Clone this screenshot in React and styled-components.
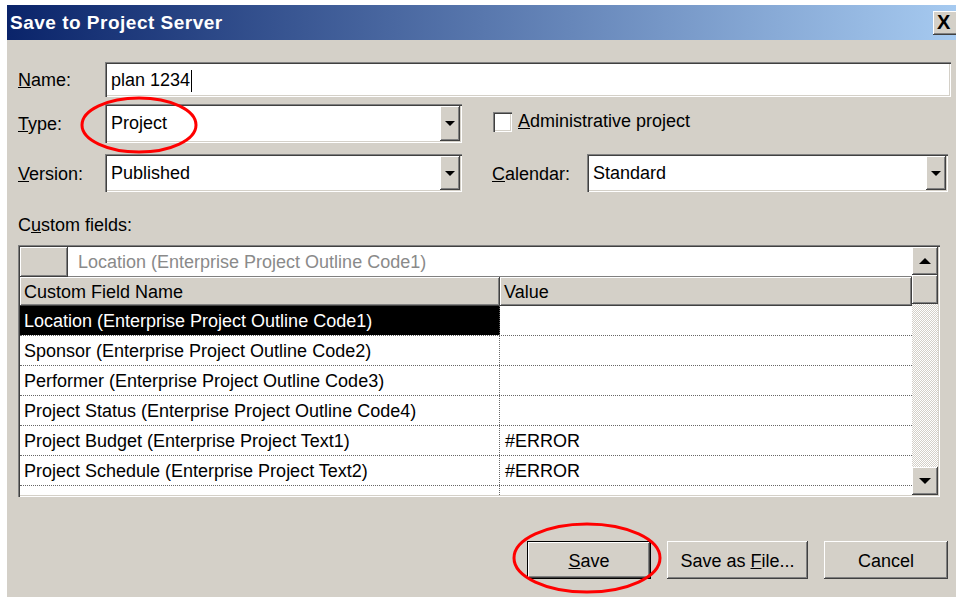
import React from 'react';
import styled, { createGlobalStyle, css } from 'styled-components';

const GlobalStyle = createGlobalStyle`
  html, body {
    margin: 0;
    background: #fff;
  }
  body {
    font-family: "Liberation Sans", Arial, sans-serif;
    color: #000;
  }
`;

const FACE = '#d4d0c8';

const sunken = css`
  box-shadow: inset 1px 1px #808080, inset 2px 2px #404040,
    inset -1px -1px #fff, inset -2px -2px ${FACE};
`;

const raised = css`
  box-shadow: inset -1px -1px #404040, inset 1px 1px #fff,
    inset -2px -2px #808080, inset 2px 2px ${FACE};
`;

const Window = styled.div`
  margin: 5px 0 0 7px;
  width: 949px;
  height: 592px;
  background: ${FACE};
  display: flex;
  flex-direction: column;
  overflow: hidden;
`;

const TitleBar = styled.div`
  height: 35px;
  flex-shrink: 0;
  background: linear-gradient(to right, #0a246a, #a6caf0);
  display: flex;
  align-items: center;
  justify-content: space-between;
  padding-left: 3px;
  overflow: hidden;
`;

const Title = styled.span`
  color: #fff;
  font-weight: bold;
  font-size: 19px;
  letter-spacing: 0.5px;
`;

const CloseButton = styled.div`
  width: 23px;
  height: 24px;
  margin-right: -4px;
  background: ${FACE};
  ${raised};
  display: flex;
  align-items: center;
  padding-left: 4px;
  font-weight: bold;
  font-size: 20px;
`;

const Body = styled.div`
  flex: 1;
  padding: 22px 0 0 11px;
  display: flex;
  flex-direction: column;
`;

const Row = styled.div`
  display: flex;
  align-items: center;
  height: ${(p) => p.$h}px;
  margin-bottom: ${(p) => p.$gap || 0}px;
`;

const Label = styled.label`
  width: ${(p) => p.$w || 87}px;
  margin-left: ${(p) => p.$offset || 0}px;
  flex-shrink: 0;
  font-size: 18px;
  padding-top: 2px;
  color: #000;
`;

const TextBox = styled.div`
  width: 846px;
  height: 100%;
  background: #fff;
  ${sunken};
  display: flex;
  align-items: center;
  padding: 2px 0 0 6px;
  box-sizing: border-box;
  font-size: 18px;
`;

const Caret = styled.span`
  display: inline-block;
  width: 1px;
  height: 22px;
  background: #000;
  margin-left: 1px;
`;

const Combo = styled.div`
  position: relative;
  width: ${(p) => p.$w}px;
  height: 100%;
  flex-shrink: 0;
  background: #fff;
  ${sunken};
  display: flex;
  align-items: center;
  justify-content: space-between;
  padding: 2px 2px 2px 6px;
  box-sizing: border-box;
  font-size: 18px;
`;

const DropButton = styled.div`
  width: 20px;
  height: 100%;
  background: ${FACE};
  ${raised};
  display: flex;
  align-items: center;
  justify-content: center;
`;

const Triangle = styled.span`
  width: 0;
  height: 0;
  border-left: ${(p) => p.$size || 5}px solid transparent;
  border-right: ${(p) => p.$size || 5}px solid transparent;
  ${(p) =>
    p.$up
      ? css`border-bottom: ${p.$size || 5}px solid #000;`
      : css`border-top: ${p.$size || 5}px solid #000;`}
`;

const CheckArea = styled.div`
  display: flex;
  align-items: center;
  margin-left: 31px;
  margin-top: -4px;
  font-size: 18px;
`;

const CheckBox = styled.span`
  width: 19px;
  height: 20px;
  background: #fff;
  ${sunken};
  margin-right: 6px;
`;

const Marker = styled.svg`
  position: absolute;
  pointer-events: none;
  z-index: 2;
  left: ${(p) => p.$x}px;
  top: ${(p) => p.$y}px;
`;

const SectionLabel = styled.div`
  font-size: 18px;
  height: 22px;
  line-height: 22px;
  margin: 22px 0 9px;
`;

const Grid = styled.div`
  width: 922px;
  height: 252px;
  ${sunken};
  padding: 2px;
  box-sizing: border-box;
  display: flex;
  background: #fff;
`;

const Table = styled.div`
  flex: 1;
  display: flex;
  flex-direction: column;
  overflow: hidden;
`;

const EditRow = styled.div`
  display: flex;
  height: 30px;
  flex-shrink: 0;
`;

const Corner = styled.div`
  width: 48px;
  background: ${FACE};
  ${raised};
`;

const EditCell = styled.div`
  flex: 1;
  background: #fff;
  color: #8a8a8a;
  font-size: 18px;
  display: flex;
  align-items: center;
  padding: 2px 0 0 10px;
  border-bottom: 1px solid #808080;
`;

const HeaderRow = styled.div`
  display: flex;
  height: 29px;
  flex-shrink: 0;
`;

const HeaderCell = styled.div`
  width: ${(p) => (p.$w ? `${p.$w}px` : 'auto')};
  flex: ${(p) => (p.$w ? '0 0 auto' : 1)};
  box-sizing: border-box;
  background: ${FACE};
  ${raised};
  font-size: 18px;
  display: flex;
  align-items: center;
  padding: 2px 0 0 4px;
`;

const DataRow = styled.div`
  display: flex;
  height: 30px;
  flex-shrink: 0;
  box-sizing: border-box;
  border-bottom: 1px dotted #666;
`;

const NameCell = styled.div`
  width: 480px;
  box-sizing: border-box;
  border-right: 1px dotted #666;
  padding: 2px 0 0 4px;
  font-size: 18px;
  display: flex;
  align-items: center;
  ${(p) =>
    p.$selected &&
    css`
      background: #000;
      color: #fff;
    `}
`;

const ValueCell = styled.div`
  flex: 1;
  padding: 2px 0 0 5px;
  font-size: 18px;
  display: flex;
  align-items: center;
`;

const ScrollBar = styled.div`
  width: 26px;
  display: flex;
  flex-direction: column;
`;

const ScrollButton = styled.div`
  height: ${(p) => p.$h}px;
  flex-shrink: 0;
  background: ${FACE};
  ${raised};
  display: flex;
  align-items: center;
  justify-content: center;
`;

const Track = styled.div`
  flex: 1;
  background: repeating-conic-gradient(${FACE} 0 25%, #fff 0 50%) 0 0 / 2px 2px;
`;

const Footer = styled.div`
  display: flex;
  justify-content: flex-end;
  gap: 16px;
  margin-top: 44px;
  padding-right: 8px;
`;

const Button = styled.div`
  position: relative;
  width: ${(p) => p.$w}px;
  height: 38px;
  box-sizing: border-box;
  background: ${FACE};
  ${raised};
  font-size: 18px;
  padding-top: 2px;
  display: flex;
  align-items: center;
  justify-content: center;
  ${(p) =>
    p.$default &&
    css`
      border: 1px solid #000;
    `}
`;

const rows = [
  ['Location (Enterprise Project Outline Code1)', ''],
  ['Sponsor (Enterprise Project Outline Code2)', ''],
  ['Performer (Enterprise Project Outline Code3)', ''],
  ['Project Status (Enterprise Project Outline Code4)', ''],
  ['Project Budget (Enterprise Project Text1)', '#ERROR'],
  ['Project Schedule (Enterprise Project Text2)', '#ERROR'],
  ['', ''],
];

// red hand-drawn highlight ring laid over a control
function Ring({ x, y, w, h }) {
  return (
    <Marker $x={x} $y={y} width={w} height={h} viewBox={`0 0 ${w} ${h}`}>
      <ellipse
        cx={w / 2}
        cy={h / 2}
        rx={w / 2 - 2}
        ry={h / 2 - 2}
        fill="none"
        stroke="#ff0000"
        strokeWidth="3"
      />
    </Marker>
  );
}

export default function App() {
  return (
    <>
      <GlobalStyle />
      <Window>
        <TitleBar>
          <Title>Save to Project Server</Title>
          <CloseButton>X</CloseButton>
        </TitleBar>
        <Body>
          <Row $h={35} $gap={7}>
            <Label>
              <u>N</u>ame:
            </Label>
            <TextBox>
              plan 1234
              <Caret />
            </TextBox>
          </Row>
          <Row $h={39} $gap={11}>
            <Label>
              <u>T</u>ype:
            </Label>
            <Combo $w={357}>
              Project
              <DropButton>
                <Triangle />
              </DropButton>
              <Ring x={-25} y={-8} w={118} h={58} />
            </Combo>
            <CheckArea>
              <CheckBox />
              <span>
                <u>A</u>dministrative project
              </span>
            </CheckArea>
          </Row>
          <Row $h={38}>
            <Label>
              <u>V</u>ersion:
            </Label>
            <Combo $w={357}>
              Published
              <DropButton>
                <Triangle />
              </DropButton>
            </Combo>
            <Label $w={95} $offset={30}>
              <u>C</u>alendar:
            </Label>
            <Combo $w={361}>
              Standard
              <DropButton>
                <Triangle />
              </DropButton>
            </Combo>
          </Row>
          <SectionLabel>
            C<u>u</u>stom fields:
          </SectionLabel>
          <Grid>
            <Table>
              <EditRow>
                <Corner />
                <EditCell>Location (Enterprise Project Outline Code1)</EditCell>
              </EditRow>
              <HeaderRow>
                <HeaderCell $w={480}>Custom Field Name</HeaderCell>
                <HeaderCell>Value</HeaderCell>
              </HeaderRow>
              {rows.map(([name, value], i) => (
                <DataRow key={i}>
                  <NameCell $selected={i === 0}>{name}</NameCell>
                  <ValueCell>{value}</ValueCell>
                </DataRow>
              ))}
            </Table>
            <ScrollBar>
              <ScrollButton $h={28}>
                <Triangle $up $size={6} />
              </ScrollButton>
              <ScrollButton $h={29} />
              <Track />
              <ScrollButton $h={28}>
                <Triangle $size={6} />
              </ScrollButton>
            </ScrollBar>
          </Grid>
          <Footer>
            <Button $w={124} $default>
              <span>
                <u>S</u>ave
              </span>
              <Ring x={-16} y={-20} w={150} h={72} />
            </Button>
            <Button $w={141}>
              <span>
                Save as <u>F</u>ile...
              </span>
            </Button>
            <Button $w={124}>Cancel</Button>
          </Footer>
        </Body>
      </Window>
    </>
  );
}
